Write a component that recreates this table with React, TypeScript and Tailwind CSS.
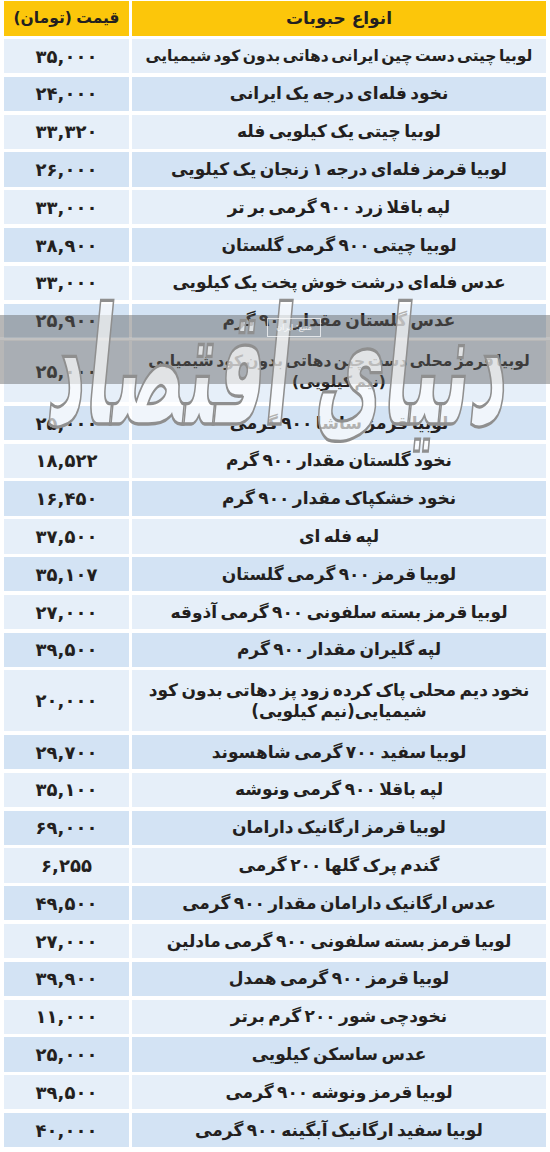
import React from "react";

type Row = { name: React.ReactNode; price: string; tall?: boolean; small?: boolean };

const rows: Row[] = [
  { name: "لوبیا چیتی دست چین ایرانی دهاتی بدون کود شیمیایی", price: "۳۵,۰۰۰", small: true },
  { name: "نخود فله‌ای درجه یک ایرانی", price: "۲۴,۰۰۰" },
  { name: "لوبیا چیتی یک کیلویی فله", price: "۳۳,۳۲۰" },
  { name: "لوبیا قرمز فله‌ای درجه ۱ زنجان یک کیلویی", price: "۲۶,۰۰۰" },
  { name: "لپه باقلا زرد ۹۰۰ گرمی بر تر", price: "۳۳,۰۰۰" },
  { name: "لوبیا چیتی ۹۰۰ گرمی گلستان", price: "۳۸,۹۰۰" },
  { name: "عدس فله‌ای درشت خوش پخت یک کیلویی", price: "۳۳,۰۰۰" },
  { name: "عدس گلستان مقدار ۹۰۰ گرم", price: "۲۵,۹۰۰" },
  {
    name: (
      <>
        لوبیا قرمز محلی دست چین دهاتی بدون کود شیمیایی
        <br />
        (نیم کیلویی)
      </>
    ),
    price: "۲۵,۰۰۰",
    tall: true,
    small: true,
  },
  { name: "لوبیا قرمز ساشا ۹۰۰ گرمی", price: "۲۵,۰۰۰" },
  { name: "نخود گلستان مقدار ۹۰۰ گرم", price: "۱۸,۵۲۲" },
  { name: "نخود خشکپاک مقدار ۹۰۰ گرم", price: "۱۶,۴۵۰" },
  { name: "لپه فله ای", price: "۳۷,۵۰۰" },
  { name: "لوبیا قرمز ۹۰۰ گرمی گلستان", price: "۳۵,۱۰۷" },
  { name: "لوبیا قرمز بسته سلفونی ۹۰۰ گرمی آذوقه", price: "۲۷,۰۰۰" },
  { name: "لپه گلیران مقدار ۹۰۰ گرم", price: "۳۹,۵۰۰" },
  {
    name: (
      <>
        نخود دیم محلی پاک کرده زود پز دهاتی بدون کود
        <br />
        شیمیایی(نیم کیلویی)
      </>
    ),
    price: "۲۰,۰۰۰",
    tall: true,
  },
  { name: "لوبیا سفید ۷۰۰ گرمی شاهسوند", price: "۲۹,۷۰۰" },
  { name: "لپه باقلا ۹۰۰ گرمی ونوشه", price: "۳۵,۱۰۰" },
  { name: "لوبیا قرمز ارگانیک دارامان", price: "۶۹,۰۰۰" },
  { name: "گندم پرک گلها ۲۰۰ گرمی", price: "۶,۲۵۵" },
  { name: "عدس ارگانیک دارامان مقدار ۹۰۰ گرمی", price: "۴۹,۵۰۰" },
  { name: "لوبیا قرمز بسته سلفونی ۹۰۰ گرمی مادلین", price: "۲۷,۰۰۰" },
  { name: "لوبیا قرمز ۹۰۰ گرمی همدل", price: "۳۹,۹۰۰" },
  { name: "نخودچی شور ۲۰۰ گرم برتر", price: "۱۱,۰۰۰" },
  { name: "عدس ساسکن کیلویی", price: "۲۵,۰۰۰" },
  { name: "لوبیا قرمز ونوشه ۹۰۰ گرمی", price: "۳۹,۵۰۰" },
  { name: "لوبیا سفید ارگانیک آبگینه ۹۰۰ گرمی", price: "۴۰,۰۰۰" },
];

export default function App() {
  return (
    <div className="relative w-[550px] h-[1152px] overflow-hidden bg-white font-['DejaVu_Sans',sans-serif] text-[#231f20]">
      <div className="flex flex-col gap-[3.5px] px-[4px] pt-px">
        <div className="flex gap-[3px] h-[34.5px]">
          <div className="w-[125px] shrink-0 bg-[#fcc60a] flex items-center justify-center text-[15.5px] font-bold [word-spacing:-1px]" dir="rtl">
            قیمت (تومان)
          </div>
          <div className="flex-1 min-w-0 bg-[#fcc60a] flex items-center justify-center text-[17px] font-bold" dir="rtl">
            انواع حبوبات
          </div>
        </div>
        {rows.map((r, i) => {
          const bg = i % 2 === 0 ? "bg-[#e6eff9]" : "bg-[#d3e3f4]";
          return (
            <div key={i} className={`flex gap-[3px] ${r.tall ? "h-[61px]" : "h-[34.3px]"}`}>
              <div className={`w-[125px] shrink-0 ${bg} flex items-center justify-center text-[18px] font-bold`} dir="ltr">
                {r.price}
              </div>
              <div
                className={`flex-1 min-w-0 ${bg} flex items-center justify-center text-center font-bold leading-[21px] whitespace-nowrap ${
                  r.small ? "text-[15.5px] [word-spacing:-3px]" : "text-[17px] [word-spacing:-2.5px]"
                }`}
                dir="rtl"
              >
                <span>{r.name}</span>
              </div>
            </div>
          );
        })}
      </div>

      {/* watermark band */}
      <div className="absolute left-0 right-0 top-[315px] h-[69px] bg-[#5f5f5f]/45 pointer-events-none" />
      <div className="absolute left-0 right-0 top-[337px] h-[3px] bg-white/15 pointer-events-none" />
      <div
        className="absolute left-[35px] top-[330px] w-[490px] text-center text-[74px] font-bold leading-none whitespace-nowrap text-white/65 scale-y-[2.2] -skew-x-12 pointer-events-none [-webkit-text-stroke:1.5px_#8f8f8f]"
        dir="rtl"
      >
        دنیای اقتصاد
      </div>
      <div className="absolute left-[267px] top-[318px] w-[54px] h-[19px] border border-white/70 flex items-center justify-center text-[8px] text-white/80 pointer-events-none" dir="rtl">
        منبع: ایران
      </div>
    </div>
  );
}
